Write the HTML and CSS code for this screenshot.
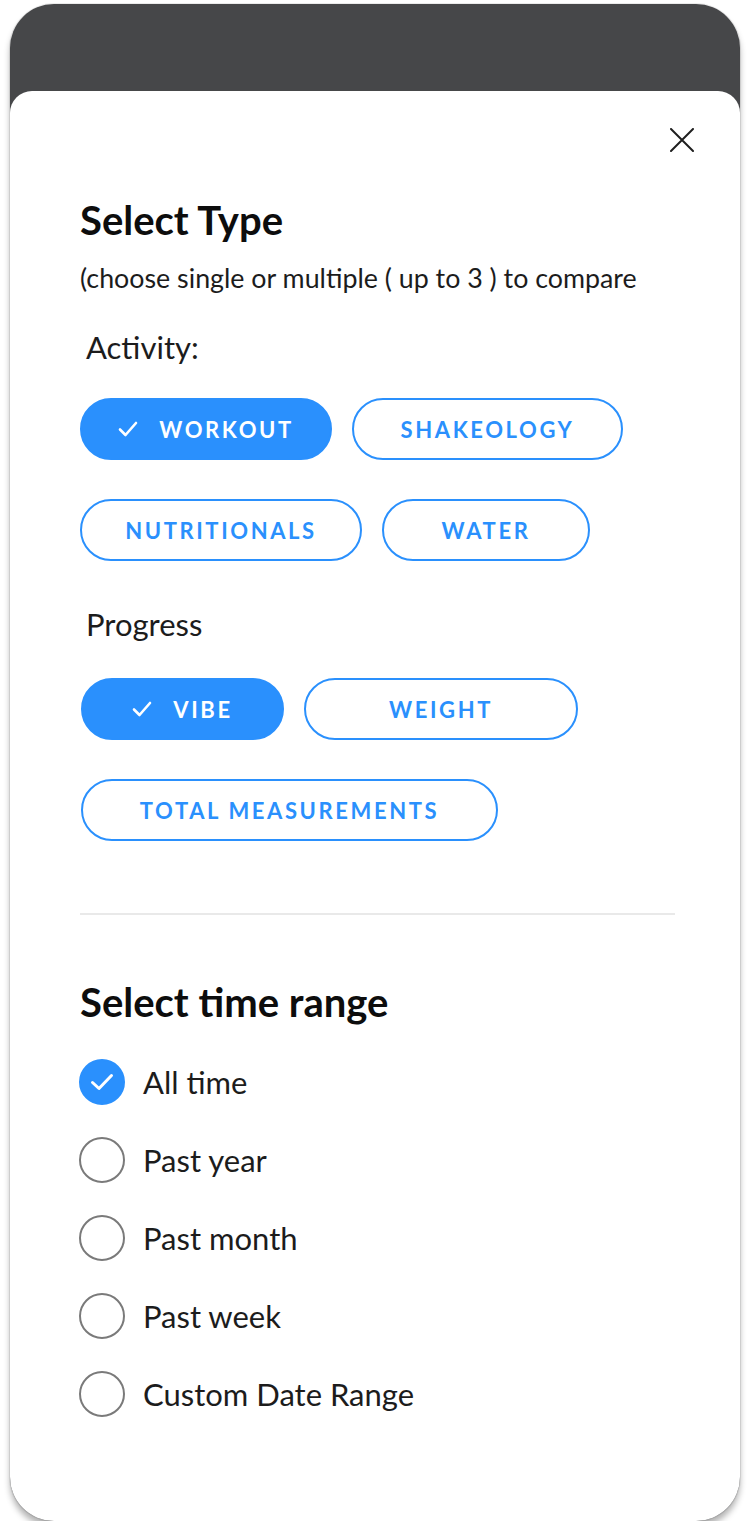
FILE: index.html
```html
<!DOCTYPE html>
<html>

<head>
    <link rel="stylesheet" href="styles.css">
</head>

<body>
    <div class="phone">
        <div class="status-bar"></div>

        <div class="sheet">
            <div class="sheet-header">
                <button class="close" aria-label="Close">
                    <svg viewBox="0 0 24 24" width="24" height="24">
                        <path d="M1 1 L23 23 M23 1 L1 23" stroke="#1f1f1f" stroke-width="2" stroke-linecap="round" fill="none" />
                    </svg>
                </button>
            </div>

            <h1 class="title">Select Type</h1>
            <p class="hint">(choose single or multiple ( up to 3 ) to compare</p>

            <h2 class="group-label">Activity:</h2>
            <div class="chips">
                <span class="chip chip-on chip-workout">
                    <svg class="tick" viewBox="0 0 20 16" width="20" height="16">
                        <path d="M2 8.5 L7.5 14 L18 2" stroke="#fff" stroke-width="2.6" fill="none" stroke-linecap="round" stroke-linejoin="round" />
                    </svg>
                    WORKOUT
                </span>
                <span class="chip chip-shakeology">SHAKEOLOGY</span>
                <span class="chip chip-nutritionals">NUTRITIONALS</span>
                <span class="chip chip-water">WATER</span>
            </div>

            <h2 class="group-label group-progress">Progress</h2>
            <div class="chips chips-progress">
                <span class="chip chip-on chip-vibe">
                    <svg class="tick" viewBox="0 0 20 16" width="20" height="16">
                        <path d="M2 8.5 L7.5 14 L18 2" stroke="#fff" stroke-width="2.6" fill="none" stroke-linecap="round" stroke-linejoin="round" />
                    </svg>
                    VIBE
                </span>
                <span class="chip chip-weight">WEIGHT</span>
                <span class="chip chip-total">TOTAL MEASUREMENTS</span>
            </div>

            <hr class="divider">

            <h1 class="title title-range">Select time range</h1>
            <ul class="ranges">
                <li class="range">
                    <span class="radio radio-on">
                        <svg viewBox="0 0 26 26" width="26" height="26">
                            <path d="M3.5 13.5 L10 19.5 L22.5 6.5" stroke="#fff" stroke-width="3" fill="none" stroke-linecap="round" stroke-linejoin="round" />
                        </svg>
                    </span>
                    All time
                </li>
                <li class="range"><span class="radio"></span>Past year</li>
                <li class="range"><span class="radio"></span>Past month</li>
                <li class="range"><span class="radio"></span>Past week</li>
                <li class="range"><span class="radio"></span>Custom Date Range</li>
            </ul>
        </div>
    </div>
</body>

</html>
```

FILE: styles.css
```css
* {
    margin: 0;
    padding: 0;
    box-sizing: border-box;
}

body {
    font-family: 'Lato', 'Noto Sans', sans-serif;
    background-color: #ffffff;
    color: #1c1c1c;
}

.phone {
    width: 730px;
    height: 1517px;
    margin: 4px 0 0 10px;
    background: #464749;
    border-radius: 44px;
    overflow: hidden;
    display: flex;
    flex-direction: column;
    box-shadow: 0px 6px 6px rgba(0, 0, 0, 0.3), 0px 0px 0px 1px #ececec;
}

.status-bar {
    height: 87px;
    flex-shrink: 0;
}

.sheet {
    flex: 1;
    background: #ffffff;
    border-radius: 22px 22px 0 0;
    padding: 0 0 0 70px;
}

.sheet-header {
    display: flex;
    justify-content: flex-end;
    padding: 37px 46px 0 0;
}

.close {
    width: 24px;
    height: 24px;
    border: none;
    background: none;
    display: block;
}

.close svg {
    display: block;
}

.title {
    font-size: 40px;
    line-height: 48px;
    font-weight: 700;
    color: #0d0d0d;
    margin-top: 44px;
}

.hint {
    font-size: 26.8px;
    line-height: 30px;
    color: #1c1c1c;
    margin-top: 19px;
}

.group-label {
    font-size: 31px;
    line-height: 32px;
    font-weight: 400;
    color: #1c1c1c;
    margin: 38px 0 0 6px;
}

.group-progress {
    margin-top: 47px;
}

.chips {
    display: flex;
    flex-wrap: wrap;
    column-gap: 20px;
    row-gap: 39px;
    margin-top: 35px;
    width: 600px;
}

.chips-progress {
    margin-top: 38px;
    padding-left: 1px;
}

.chip {
    height: 62px;
    border: 2px solid #2a90fd;
    border-radius: 31px;
    display: flex;
    align-items: center;
    justify-content: center;
    gap: 21px;
    font-size: 22px;
    font-weight: 700;
    letter-spacing: 2.6px;
    color: #2a90fd;
}

.chip-on {
    background-color: #2a90fd;
    color: #ffffff;
}

.tick {
    display: block;
    flex-shrink: 0;
}

.chip-workout { width: 252px; }
.chip-shakeology { width: 271px; }
.chip-nutritionals { width: 282px; }
.chip-water { width: 208px; }
.chip-vibe { width: 203px; }
.chip-weight { width: 274px; }
.chip-total { width: 417px; }

.divider {
    border: none;
    height: 2px;
    background-color: #e9e9e9;
    width: 595px;
    margin-top: 72px;
}

.title-range {
    margin-top: 63px;
}

.ranges {
    list-style: none;
    margin-top: 33px;
    display: flex;
    flex-direction: column;
    gap: 32px;
}

.range {
    display: flex;
    align-items: center;
    gap: 18px;
    height: 46px;
    font-size: 31px;
    color: #1c1c1c;
}

.radio {
    width: 46px;
    height: 46px;
    border-radius: 50%;
    border: 2px solid #7a7a7a;
    display: flex;
    align-items: center;
    justify-content: center;
    flex-shrink: 0;
    margin-left: -1px;
}

.radio-on {
    border-color: #2a90fd;
    background-color: #2a90fd;
}
```
